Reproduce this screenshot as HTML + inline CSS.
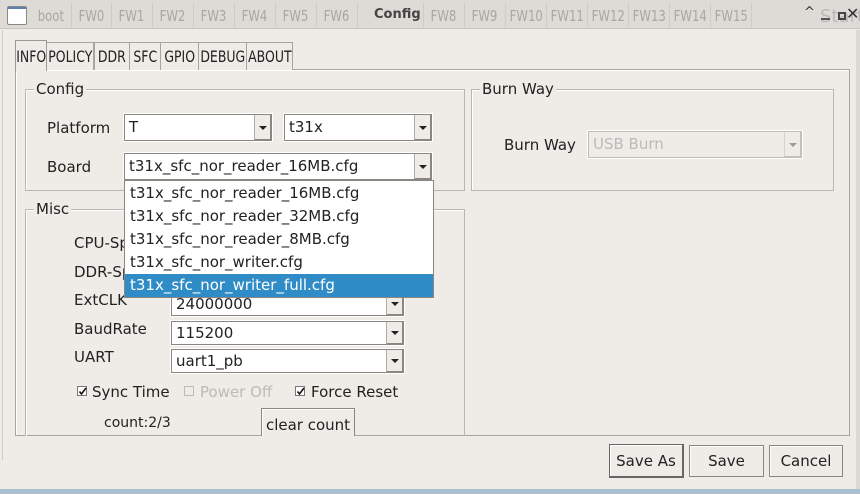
<!DOCTYPE html>
<html><head><meta charset="utf-8"><style>
*{box-sizing:border-box;margin:0;padding:0}
body{width:860px;height:494px;overflow:hidden;background:#efebe7;font-family:"DejaVu Sans","Liberation Sans",sans-serif;font-size:15px;color:#222;position:relative}
.a{position:absolute;white-space:nowrap}
.tb{position:absolute;left:0;top:0;width:860px;height:29px;background:#dedad6;border-bottom:1px solid #c8c4c0}
.tt{position:absolute;top:3px;height:26px;border-right:1px solid #cfcbc7;color:#a9a6a3;font-size:15px;white-space:nowrap;display:flex;justify-content:center;align-items:center}
.tt span,.tab span{display:inline-block;flex:none;transform:scaleX(0.78);transform-origin:center}
.grp{position:absolute;border:1px solid #b9b5b1;box-shadow:inset 1px 1px 0 #fff}
.gt{position:absolute;background:#efebe7;padding:0 2px;top:-10px;left:8px;line-height:18px}
.cb{position:absolute;background:#fff;border:1px solid #8a8783;box-shadow:0 0 0 1px #fff;line-height:24px;padding-left:4px;overflow:hidden}
.cb .ar{position:absolute;right:0;top:0;bottom:0;width:17px;border-left:1px solid #b0aca8;background:#efebe7;box-shadow:inset -1px -1px 0 #8a8783}
.cb .ar:after{content:"";position:absolute;left:4px;top:50%;margin-top:-2px;border-left:4px solid transparent;border-right:4px solid transparent;border-top:4px solid #222}
.tab{position:absolute;top:42px;height:28px;border:1px solid #a8a4a0;border-bottom:none;background:#efebe7;font-size:16px;white-space:nowrap;display:flex;justify-content:center;align-items:center}
.btn{position:absolute;border:1px solid #8a8783;background:#efebe7;box-shadow:inset 1px 1px 0 #fff;text-align:center}
.chk{position:absolute;width:10px;height:10px;border:1px solid #777;background:#fff}
.chk svg{position:absolute;left:0;top:0}
</style></head><body>
<div class="tb">
 <div class="a" style="left:7px;top:6px;width:20px;height:19px;border:1px solid #888;background:linear-gradient(#5a7fb0 0 2px,#fff 2px);border-radius:2px"></div>
 <div class="tt" style="left:31px;width:41px"><span>boot</span></div>
 <div class="tt" style="left:72px;width:40px"><span>FW0</span></div>
 <div class="tt" style="left:112px;width:41px"><span>FW1</span></div>
 <div class="tt" style="left:153px;width:41px"><span>FW2</span></div>
 <div class="tt" style="left:194px;width:41px"><span>FW3</span></div>
 <div class="tt" style="left:235px;width:41px"><span>FW4</span></div>
 <div class="tt" style="left:276px;width:41px"><span>FW5</span></div>
 <div class="tt" style="left:317px;width:41px"><span>FW6</span></div>
 <div class="tt" style="left:358px;width:66px"></div>
 <div class="tt" style="left:424px;width:41px"><span>FW8</span></div>
 <div class="tt" style="left:465px;width:41px"><span>FW9</span></div>
 <div class="tt" style="left:506px;width:41px"><span>FW10</span></div>
 <div class="tt" style="left:547px;width:41px"><span>FW11</span></div>
 <div class="tt" style="left:588px;width:41px"><span>FW12</span></div>
 <div class="tt" style="left:629px;width:41px"><span>FW13</span></div>
 <div class="tt" style="left:670px;width:41px"><span>FW14</span></div>
 <div class="tt" style="left:711px;width:41px"><span>FW15</span></div>
 <div class="a" style="left:374px;top:7px;font-weight:bold;font-size:13px;color:#444">Config</div>
 <div class="a" style="left:804px;top:5px;font-size:13px;color:#333">^</div>
 <div class="a" style="left:820px;top:6px;font-size:18px;color:#bbb">Start</div>
 <div class="a" style="left:821px;top:18px;width:9px;height:2px;background:#555"></div>
 <div class="a" style="left:838px;top:12px;width:8px;height:8px;border:2px solid #444"></div>
 <div class="a" style="left:846px;top:4px;font-size:16px;color:#333">✕</div>
</div>
<div class="a" style="left:2px;top:30px;width:1px;height:430px;background:#ccc"></div>
<div class="a" style="left:856px;top:30px;width:4px;height:464px;background:#dcd8d4"></div>
<div class="a" style="left:0;top:489px;width:860px;height:5px;background:#aac0d0"></div>

<!-- tabs -->
<div class="a" style="left:15px;top:69px;width:835px;height:367px;border:1px solid #a8a4a0;box-shadow:inset 1px 1px 0 #fff"></div>
<div class="tab" style="left:46px;width:48px"><span>POLICY</span></div>
<div class="tab" style="left:94px;width:36px"><span>DDR</span></div>
<div class="tab" style="left:129px;width:32px"><span>SFC</span></div>
<div class="tab" style="left:160px;width:39px"><span>GPIO</span></div>
<div class="tab" style="left:198px;width:49px"><span>DEBUG</span></div>
<div class="tab" style="left:246px;width:47px"><span>ABOUT</span></div>
<div class="tab" style="left:15px;top:40px;width:32px;height:31px;border-color:#999"><span>INFO</span></div>

<!-- Config group -->
<div class="grp" style="left:25px;top:89px;width:440px;height:102px"><div class="gt">Config</div></div>
<div class="a" style="left:47px;top:119px">Platform</div>
<div class="cb" style="left:124px;top:114px;width:148px;height:27px">T<div class="ar"></div></div>
<div class="cb" style="left:284px;top:114px;width:148px;height:27px">t31x<div class="ar"></div></div>
<div class="a" style="left:47px;top:158px">Board</div>
<div class="cb" style="left:124px;top:153px;width:308px;height:27px">t31x_sfc_nor_reader_16MB.cfg<div class="ar"></div></div>

<!-- Burn Way -->
<div class="grp" style="left:471px;top:89px;width:363px;height:102px"><div class="gt">Burn Way</div></div>
<div class="a" style="left:504px;top:136px">Burn Way</div>
<div class="cb" style="left:588px;top:131px;width:214px;height:27px;background:#efebe7;border-color:#c0bcb8;color:#bbb">USB Burn<div class="ar" style="opacity:.4"></div></div>

<!-- Misc -->
<div class="grp" style="left:25px;top:209px;width:440px;height:227px;border-bottom:none"><div class="gt">Misc</div></div>
<div class="a" style="left:74px;top:234px">CPU-Speed</div>
<div class="a" style="left:74px;top:263px">DDR-Speed</div>
<div class="a" style="left:74px;top:291px">ExtCLK</div>
<div class="a" style="left:74px;top:320px">BaudRate</div>
<div class="a" style="left:74px;top:348px">UART</div>
<div class="cb" style="left:171px;top:292px;width:233px;height:24px;line-height:22px">24000000<div class="ar"></div></div>
<div class="cb" style="left:171px;top:321px;width:233px;height:24px;line-height:22px">115200<div class="ar"></div></div>
<div class="cb" style="left:171px;top:349px;width:233px;height:24px;line-height:22px">uart1_pb<div class="ar"></div></div>
<div class="chk" style="left:77px;top:386px"><svg width="9" height="9"><path d="M1.5 4.5L3.5 7L8 1" stroke="#111" stroke-width="1.6" fill="none"/></svg></div>
<div class="a" style="left:92px;top:383px">Sync Time</div>
<div class="chk" style="left:184px;top:386px;border-color:#bbb;background:#efebe7"></div>
<div class="a" style="left:200px;top:383px;color:#bdbab7">Power Off</div>
<div class="chk" style="left:295px;top:386px"><svg width="9" height="9"><path d="M1.5 4.5L3.5 7L8 1" stroke="#111" stroke-width="1.6" fill="none"/></svg></div>
<div class="a" style="left:311px;top:383px">Force Reset</div>
<div class="a" style="left:104px;top:415px;font-size:14px">count:2/3</div>
<div class="btn" style="left:261px;top:408px;width:94px;height:28px;border-bottom:none;line-height:32px">clear count</div>

<!-- popup -->
<div class="a" style="left:124px;top:180px;width:310px;height:118px;background:#fff;border:1px solid #8a8783;line-height:23px;padding-top:1px">
 <div style="padding-left:5px">t31x_sfc_nor_reader_16MB.cfg</div>
 <div style="padding-left:5px">t31x_sfc_nor_reader_32MB.cfg</div>
 <div style="padding-left:5px">t31x_sfc_nor_reader_8MB.cfg</div>
 <div style="padding-left:5px">t31x_sfc_nor_writer.cfg</div>
 <div style="padding-left:5px;background:#308cc6;color:#fff">t31x_sfc_nor_writer_full.cfg</div>
</div>

<!-- buttons -->
<div class="btn" style="left:609px;top:444px;width:75px;height:34px;line-height:32px;border-color:#666;border-width:1px 2px 2px 1px">Save As</div>
<div class="btn" style="left:689px;top:445px;width:75px;height:32px;line-height:30px">Save</div>
<div class="btn" style="left:769px;top:445px;width:74px;height:32px;line-height:30px">Cancel</div>
</body></html>
